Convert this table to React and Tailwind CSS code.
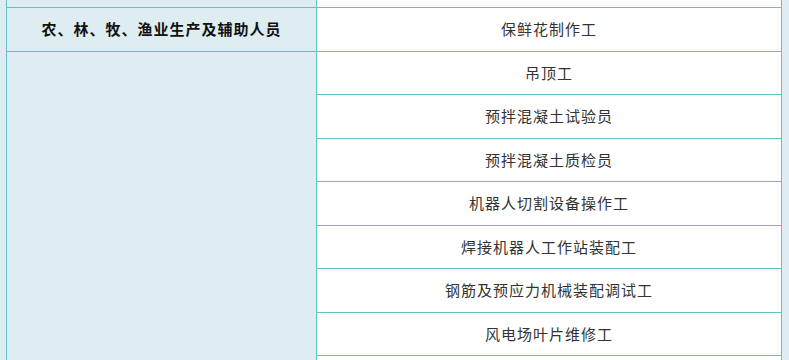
import React from "react"

const jobs = [
  "吊顶工",
  "预拌混凝土试验员",
  "预拌混凝土质检员",
  "机器人切割设备操作工",
  "焊接机器人工作站装配工",
  "钢筋及预应力机械装配调试工",
  "风电场叶片维修工",
  "",
]

const rowHeights = ["h-[43px]", "h-[44px]"]

const JobRow = ({ name, index }) => {
  return (
    <div
      className={`${rowHeights[index % 2]} flex shrink-0 items-center justify-center border-b border-[#5fc3c9] text-[15px] tracking-[1px] text-[#333]`}
    >
      {name}
    </div>
  )
}

const App = () => {
  return (
    <div
      className="h-[360px] w-[789px] overflow-hidden bg-[#deedf2] pl-[6px]"
      style={{ fontFamily: '"Noto Sans CJK SC", "Noto Sans", sans-serif' }}
    >
      <div className="flex w-[776px] border-l border-[#5fc3c9]">
        {/* category column */}
        <div className="flex w-[310px] shrink-0 flex-col border-r border-[#5fc3c9]">
          <div className="h-[8px] shrink-0 border-b border-[#5fc3c9]" />
          <div className="flex h-[44px] shrink-0 items-center justify-center border-b border-[#5fc3c9] text-[15px] font-bold tracking-[1px] text-[#111]">
            农、林、牧、渔业生产及辅助人员
          </div>
          <div className="h-[400px]" />
        </div>

        {/* occupation column */}
        <div className="flex w-[465px] shrink-0 flex-col border-r border-[#5fc3c9] bg-white">
          <div className="h-[8px] shrink-0 border-b border-[#5fc3c9]" />
          <div className="flex h-[44px] shrink-0 items-center justify-center border-b border-[#5fc3c9] text-[15px] tracking-[1px] text-[#333]">
            保鲜花制作工
          </div>
          {jobs.map((name, i) => (
            <JobRow key={i} name={name} index={i} />
          ))}
        </div>
      </div>
    </div>
  )
}

export default App
